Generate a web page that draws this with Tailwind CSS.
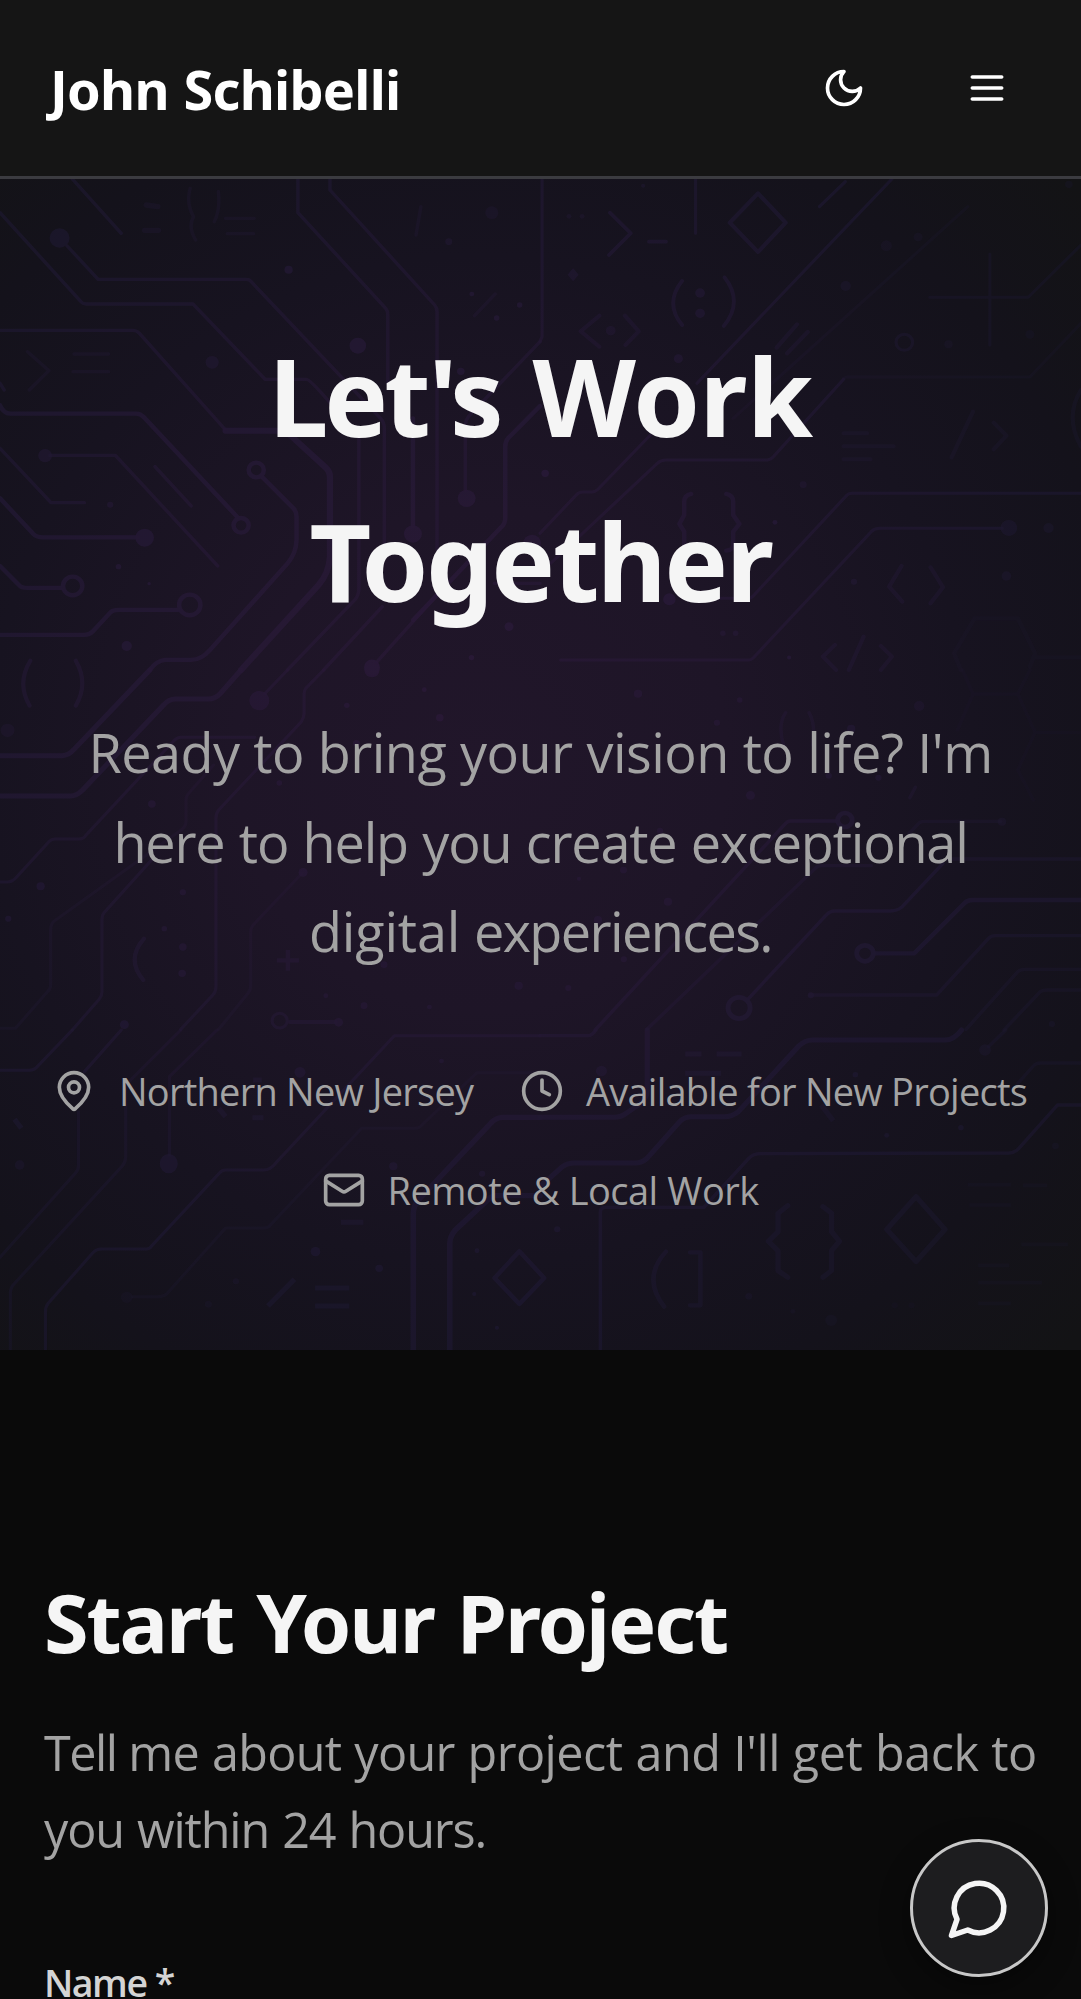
<!DOCTYPE html>
<html lang="en">
<head>
<meta charset="utf-8">
<title>John Schibelli</title>
<script src="https://cdn.jsdelivr.net/npm/@tailwindcss/browser@4"></script>
</head>
<body class="relative h-[1999px] w-[1081px] overflow-hidden bg-[#0a0a0a] font-['Open_Sans',sans-serif] text-[#a3a3a3]">

<header class="flex h-[179px] items-center justify-between border-b-[3px] border-[#3b3b40] bg-[#151515] pr-[72px] pl-[50px]">
  <div class="mt-[2px] font-['Noto_Sans',sans-serif] text-[54px] leading-[77px] font-bold tracking-[-0.75px] [word-spacing:1.5px] whitespace-nowrap text-white">John Schibelli</div>
  <div class="flex items-center gap-[99px] text-white">
    <button aria-label="Toggle theme">
      <svg class="size-[44px]" viewBox="0 0 24 24" fill="none" stroke="currentColor" stroke-width="2" stroke-linecap="round" stroke-linejoin="round"><path d="M12 3a6 6 0 0 0 9 9 9 9 0 1 1-9-9Z"/></svg>
    </button>
    <button aria-label="Menu">
      <svg class="size-[44px]" viewBox="0 0 24 24" fill="none" stroke="currentColor" stroke-width="2" stroke-linecap="round" stroke-linejoin="round"><path d="M4 6h16M4 12h16M4 18h16"/></svg>
    </button>
  </div>
</header>

<section class="relative h-[1171px] overflow-hidden bg-[#131316] pt-[134px]">
  <!-- Circuit board backdrop -->
  <svg class="absolute inset-0 h-full w-full" viewBox="0 179 1081 1171" preserveAspectRatio="none" aria-hidden="true">
    <defs>
      <radialGradient id="glow" gradientUnits="userSpaceOnUse" cx="0" cy="0" r="1" gradientTransform="translate(480 760) scale(820 840)">
        <stop offset="0" stop-color="#21162a"/>
        <stop offset=".3" stop-color="#1e1527"/>
        <stop offset=".6" stop-color="#171320"/>
        <stop offset=".8" stop-color="#14121b"/>
        <stop offset="1" stop-color="#131315"/>
      </radialGradient>
      <radialGradient id="ink" gradientUnits="userSpaceOnUse" cx="0" cy="0" r="1" gradientTransform="translate(450 700) scale(860 860)">
        <stop offset="0" stop-color="#2a1937"/>
        <stop offset=".35" stop-color="#251834"/>
        <stop offset=".7" stop-color="#1d182f"/>
        <stop offset="1" stop-color="#181629"/>
      </radialGradient>
      <mask id="traces" maskUnits="userSpaceOnUse" x="0" y="179" width="1081" height="1171">
        <!-- upper left -->
        <g transform="translate(0 170) scale(.3444 .3333)" fill="none" stroke="#fff" stroke-width="10" stroke-linecap="round" stroke-linejoin="round">
          <g opacity=".75">
            <path d="M210 27L352 190M0 128L235 395Q240 402 250 402H560L770 628H890Q900 628 960 700" />
            <path d="M195 228L285 328H715Q725 328 730 336L1105 745Q1116 757 1116 775V1130"/>
            <path d="M0 481H385Q397 481 405 490L655 780"/>
            <path d="M865 27V128L1120 415Q1126 422 1126 435V640M958 27V60L1262 405Q1269 413 1269 425V1140"/>
            <path d="M145 856H335L632 1188M450 890L555 1008M0 835L148 998H245M0 640L12 660"/>
            <path d="M1568 515L1360 740Q1351 752 1351 765V960M1042 805V1260Q1040 1280 1030 1290L835 1500M1110 1310L940 1500M1568 1240H1435M1290 1250L1095 1475"/>
          </g>
          <g stroke-width="13" opacity=".9">
            <path d="M0 706Q10 730 30 731H395Q408 731 418 742L688 1040"/>
            <path d="M0 985L95 1090Q105 1102 125 1102H400M0 1188L55 1245Q62 1254 80 1254H182M0 1395H245Q260 1395 270 1384L320 1328Q328 1320 345 1320H516"/>
            <path d="M762 922L852 1015Q861 1025 861 1040V1110Q860 1150 835 1180L610 1440Q585 1470 555 1470H480Q455 1472 435 1500"/>
            <path d="M1199 745V1070M1568 708L1475 805Q1467 815 1467 830V1045Q1467 1062 1455 1072L1200 1350" />
            <circle cx="700" cy="1066" r="22"/><circle cx="744" cy="900" r="22"/><circle cx="211" cy="1248" r="28"/><circle cx="551" cy="1305" r="31"/>
          </g>
          <path stroke-width="18" opacity=".9" d="M655 782H805Q835 782 860 812L948 895Q958 905 958 920V1160Q955 1210 925 1245L700 1500"/>
          <g fill="#fff" stroke="none" opacity=".9">
            <circle cx="173" cy="204" r="29" opacity=".8"/><circle cx="616" cy="577" r="19" opacity=".7"/><circle cx="1039" cy="527" r="24"/><circle cx="838" cy="299" r="12"/><circle cx="1303" cy="215" r="10" opacity=".7"/><circle cx="1428" cy="128" r="19" opacity=".5"/><circle cx="131" cy="857" r="20" opacity=".8"/><circle cx="420" cy="1103" r="27"/><circle cx="1355" cy="985" r="26"/><circle cx="1199" cy="1092" r="26"/><circle cx="1338" cy="604" r="11"/><circle cx="1545" cy="1120" r="26"/><circle cx="320" cy="1004" r="9" opacity=".8"/><circle cx="344" cy="1190" r="8"/><circle cx="368" cy="1428" r="15"/><circle cx="1080" cy="1492" r="23"/><circle cx="1478" cy="1370" r="13"/><circle cx="1369" cy="1463" r="8"/><circle cx="1370" cy="372" r="7"/><circle cx="1442" cy="444" r="8"/><circle cx="1509" cy="405" r="8"/><circle cx="433" cy="1241" r="5"/>
          </g>
          <g opacity=".45">
            <path d="M655 145H738M660 191H736M215 552H315M212 605H315M80 545L142 602L85 660M1378 437L1438 372M552 55Q540 100 562 140Q545 170 568 210M634 65Q640 120 622 155M1222 110L1208 195"/>
            <path stroke-width="16" d="M425 105L458 110M420 181H460"/>
          </g>
        </g>
        <!-- upper right -->
        <g transform="translate(540 170) scale(.345 .3333)" fill="none" stroke="#fff" stroke-width="9" stroke-linecap="round" stroke-linejoin="round">
          <g opacity=".8">
            <path d="M6 27V500L0 515M451 27V190M1020 27L455 640M885 35L810 110M0 1090L105 975Q112 966 125 966H150Q160 966 168 958L320 795M0 1210L340 880Q350 870 365 870H660Q670 868 675 862L880 628" />
            <path d="M560 745L1240 110M880 625L890 621H1420L1568 460" opacity=".4"/>
            <path d="M520 1285H600Q612 1285 618 1278L890 975Q895 970 905 970H1568M60 1470H605Q612 1470 618 1464L960 1085Q970 1075 985 1075H1340"/>
            <path d="M1130 382H1415L1568 225M1304 252V525" opacity=".6"/>
            <path stroke-width="12" d="M632 70L712 158L632 246L550 158Z"/>
            <path stroke-width="11" d="M203 128L263 190L200 255M316 215H365M412 333Q360 400 412 465M535 322Q590 395 533 468"/>
          </g>
          <path stroke-width="13" opacity=".8" d="M438 972Q418 976 418 995V1035L404 1062L418 1085V1125Q418 1140 438 1142M540 972Q560 976 560 995V1035L578 1062L560 1085V1125Q560 1140 540 1142"/>
          <g opacity=".6" stroke-width="12">
            <path d="M172 437L118 484L172 530M246 437L286 484L248 525M745 463L686 533M776 486L716 550"/>
            <path d="M880 790H948M880 829H1025M880 868H958M1255 725L1193 862M1315 758L1352 797L1315 838M1568 660Q1520 740 1568 830" opacity=".7"/>
            <path d="M1048 1188L1012 1250L1050 1295M1132 1192L1168 1252L1132 1300M855 1425L820 1460L858 1500M938 1400L895 1500M988 1428L1020 1460L988 1500"/>
            <circle cx="1056" cy="517" r="24" stroke-width="9"/>
            <path d="M1200 1450L1260 1345H1385L1435 1450L1420 1490M1200 1450L1220 1500M1435 1462H1568" opacity=".4"/>
          </g>
          <g fill="#fff" stroke="none">
            <circle cx="464" cy="369" r="14" opacity=".8"/><circle cx="464" cy="430" r="14" opacity=".8"/><circle cx="401" cy="566" r="13" opacity=".8"/><circle cx="886" cy="348" r="15" opacity=".5"/><circle cx="1004" cy="227" r="16" opacity=".4"/><circle cx="1096" cy="201" r="13" opacity=".4"/><circle cx="1184" cy="523" r="12" opacity=".4"/><circle cx="1420" cy="493" r="13" opacity=".3"/><circle cx="1359" cy="1074" r="24" opacity=".6"/><circle cx="1474" cy="1074" r="15" opacity=".5"/><circle cx="1352" cy="1218" r="14" opacity=".5"/><circle cx="910" cy="1235" r="9" opacity=".7"/><circle cx="763" cy="944" r="10" opacity=".6"/><circle cx="681" cy="1057" r="7"/><circle cx="15" cy="910" r="11"/><circle cx="530" cy="1390" r="8" opacity=".7"/><circle cx="567" cy="1390" r="8" opacity=".7"/><circle cx="375" cy="1288" r="18"/><circle cx="205" cy="482" r="14" opacity=".6"/><path d="M96 295L112 314L96 334L80 314Z" opacity=".7"/><circle cx="84" cy="139" r="7" opacity=".5"/><circle cx="122" cy="139" r="7" opacity=".5"/><circle cx="299" cy="47" r="6" opacity=".6"/><circle cx="1533" cy="43" r="11" opacity=".4"/><circle cx="722" cy="1463" r="6"/>
          </g>
        </g>
        <!-- middle left -->
        <g transform="translate(0 670) scale(.3444 .3333)" fill="none" stroke="#fff" stroke-width="9" stroke-linecap="round" stroke-linejoin="round">
          <path stroke-width="15" opacity=".9" d="M435 0L215 238Q200 257 180 257H0M700 0L640 70Q625 87 605 87H510Q490 87 475 105L240 360Q222 378 205 378H0"/>
          <g opacity=".75">
            <path d="M835 0L770 70M940 0L888 55Q883 62 883 70V130Q882 145 875 155L635 420Q627 430 627 445V950Q627 965 618 975L525 1078M740 202H525Q515 202 505 212L250 495Q243 507 230 507H160Q150 507 142 515L45 625Q35 636 20 636H0"/>
            <path d="M620 285L548 370Q540 378 540 390V455Q540 467 530 477L155 755Q147 765 147 780V945Q147 957 138 965L45 1075H0" opacity=".6"/>
            <path d="M440 570L302 728Q296 735 296 748V965Q296 978 288 988L210 1080"/>
            <path d="M875 612L735 765Q728 775 728 785V945Q728 960 720 970L635 1078" opacity=".6"/>
            <path d="M88 -28Q48 40 86 107M220 -28Q258 40 220 107M418 806Q365 868 416 930M842 1056H975" stroke-width="12"/>
            <path stroke-width="13" stroke-linecap="butt" d="M804 871H868M836 840V902"/>
            <circle cx="812" cy="1052" r="22"/>
          </g>
          <g fill="#fff" stroke="none" opacity=".85">
            <circle cx="753" cy="92" r="29"/><circle cx="1080" cy="0" r="22"/><circle cx="22" cy="181" r="20" opacity=".6"/><circle cx="441" cy="402" r="11"/><circle cx="118" cy="649" r="12"/><circle cx="24" cy="746" r="9"/><circle cx="531" cy="667" r="9"/><circle cx="477" cy="776" r="8"/><circle cx="531" cy="831" r="11"/><circle cx="529" cy="910" r="11"/><circle cx="880" cy="607" r="13"/><circle cx="1277" cy="143" r="11"/><circle cx="1232" cy="59" r="7"/><circle cx="1007" cy="106" r="8"/><circle cx="983" cy="1057" r="13"/><circle cx="1057" cy="1007" r="10"/><circle cx="1506" cy="947" r="12"/><circle cx="946" cy="977" r="7"/><circle cx="361" cy="1064" r="13"/><circle cx="1115" cy="884" r="10"/><circle cx="1035" cy="220" r="10"/><circle cx="811" cy="339" r="8"/><circle cx="1247" cy="1011" r="7"/>
          </g>
        </g>
        <!-- middle right -->
        <g transform="translate(540 670) scale(.345 .3333)" fill="none" stroke="#fff" stroke-width="10" stroke-linecap="round" stroke-linejoin="round">
          <g opacity=".85">
            <path d="M858 453H725Q718 453 712 460L160 1080M605 985L830 735Q840 723 855 723H1015Q1035 723 1048 712L1168 580"/>
            <path stroke-width="13" d="M970 850H1085L1230 700Q1238 690 1255 690H1568"/>
            <path d="M785 975H1150L1300 805Q1308 797 1320 797H1568M1180 567H1568M960 587H815Q805 587 798 595L310 1078" opacity=".75"/>
            <path d="M1235 1078L1385 905Q1392 898 1405 898H1568M1345 1080L1450 965Q1458 960 1470 960H1568M1070 490L1100 458Q1105 454 1115 454H1335" opacity=".6"/>
            <path d="M712 128Q688 165 706 225M780 128Q800 165 790 225M1088 352L1072 383" opacity=".7"/>
            <path d="M1225 0L1255 72H1385L1420 0M1255 72L1210 180M1385 72L1435 187H1568M1435 187L1385 300L1430 390" opacity=".22"/>
          </g>
          <g stroke-width="14" opacity=".9"><circle cx="884" cy="450" r="21"/><circle cx="942" cy="850" r="24"/><circle cx="577" cy="1014" r="32"/></g>
          <g fill="#fff" stroke="none" opacity=".8">
            <circle cx="284" cy="71" r="12"/><circle cx="513" cy="158" r="9"/><circle cx="579" cy="90" r="8"/><circle cx="610" cy="376" r="13"/><circle cx="902" cy="176" r="12"/><circle cx="1099" cy="108" r="15" opacity=".7"/><circle cx="981" cy="323" r="9"/><circle cx="837" cy="317" r="9"/><circle cx="1339" cy="455" r="12" opacity=".7"/><circle cx="242" cy="600" r="10"/><circle cx="371" cy="695" r="12"/><circle cx="243" cy="868" r="9"/><circle cx="82" cy="954" r="9"/><circle cx="168" cy="750" r="12"/><circle cx="348" cy="482" r="9"/><circle cx="785" cy="976" r="9"/><circle cx="1484" cy="1062" r="9" opacity=".6"/><circle cx="113" cy="626" r="6"/>
          </g>
        </g>
        <!-- lower left -->
        <g transform="translate(0 1030) scale(.3444 .3333)" fill="none" stroke="#fff" stroke-width="9" stroke-linecap="round" stroke-linejoin="round">
          <g opacity=".8">
            <path d="M210 0L110 108Q100 121 85 121H0M352 0L245 125M1568 17H1145L800 400Q785 420 765 420H655Q645 420 638 428L440 648Q435 657 425 657H295Q280 657 270 668L140 820Q132 830 132 845V960"/>
            <path d="M525 0L365 165V380Q365 395 355 408L38 765Q30 775 30 790V960M228 245V405Q228 420 220 428L0 682M630 0L492 140V375" opacity=".7"/>
            <path d="M1568 128H1385L1225 285Q1218 295 1205 295H1050L785 585Q780 594 765 594H655L490 785Q480 800 460 800H385" opacity=".5"/>
          </g>
          <path stroke-width="16" d="M1568 262H1460Q1440 262 1425 280L1215 510Q1200 528 1200 550V960M1568 497H1440Q1428 497 1418 508L1322 600Q1306 620 1306 640V960" opacity=".85"/>
          <path stroke-width="13" d="M1508 664L1580 744L1508 822L1436 744Z" opacity=".8"/>
          <g opacity=".65" stroke-width="15" stroke-linecap="butt"><path d="M915 774H1014M915 828H1014M990 577H1055M778 828L855 748M735 150H760M733 263H765M42 268L62 295M635 235L655 260"/></g>
          <g fill="#fff" stroke="none" opacity=".8">
            <ellipse cx="490" cy="401" rx="26" ry="29"/><circle cx="871" cy="127" r="16"/><circle cx="57" cy="405" r="14" opacity=".7"/><circle cx="916" cy="665" r="14"/><circle cx="1101" cy="715" r="11"/><circle cx="1142" cy="409" r="12"/><circle cx="1400" cy="431" r="9"/><circle cx="685" cy="754" r="9" opacity=".6"/><circle cx="368" cy="802" r="17" opacity=".4"/><circle cx="605" cy="823" r="10" opacity=".5"/><circle cx="1282" cy="93" r="7"/><circle cx="1377" cy="792" r="6"/><circle cx="1443" cy="893" r="6"/><circle cx="1385" cy="662" r="7"/>
          </g>
        </g>
        <!-- lower right -->
        <g transform="translate(540 1030) scale(.345 .3333)" fill="none" stroke="#fff" stroke-width="10" stroke-linecap="round" stroke-linejoin="round">
          <path stroke-width="15" opacity=".85" d="M0 262H215Q235 262 250 250L285 225Q311 205 311 180V0M0 470L65 410Q80 399 100 399H275Q295 399 310 385L405 275Q418 260 440 260H535Q555 260 575 245L750 48Q768 30 790 30H1175Q1200 30 1222 0"/>
          <g opacity=".8">
            <path d="M0 17H140Q150 17 162 0M175 960V545Q176 532 190 532H475L605 385Q618 371 640 371L1360 369Q1378 368 1388 355L1500 225H1568"/>
            <path d="M1350 0L1300 50M1385 160L1430 108Q1438 99 1450 99H1568" opacity=".6"/>
            <path stroke-width="13" d="M365 665Q295 745 360 830M435 667H465V826H435" opacity=".8"/>
            <path stroke-width="15" d="M718 527L690 550V605L662 634L690 662V722L718 742M820 530L845 550V605L868 634L845 662V722L820 742M1090 500L1174 598L1090 695L1005 598Z" opacity=".75"/>
          </g>
          <g stroke-width="15" stroke-linecap="butt">
            <path d="M421 72H468M512 72H584M421 130H525" opacity=".7"/>
            <path d="M1240 464H1365M1245 525H1365M1395 643H1530M1270 706H1360M1270 758H1455M1270 820H1365M1400 466H1470" opacity=".3" stroke-width="11"/>
            <path d="M815 225L850 272" opacity=".5"/>
          </g>
          <g fill="#fff" stroke="none" opacity=".75">
            <circle cx="178" cy="123" r="16"/><circle cx="1290" cy="60" r="17" opacity=".7"/><circle cx="50" cy="598" r="9"/><circle cx="605" cy="799" r="10" opacity=".6"/><circle cx="844" cy="871" r="17" opacity=".5"/><circle cx="1220" cy="293" r="8"/><circle cx="1005" cy="316" r="7"/><circle cx="1494" cy="348" r="10" opacity=".5"/><circle cx="914" cy="134" r="8"/><circle cx="1028" cy="826" r="9" opacity=".3"/><circle cx="1077" cy="826" r="9" opacity=".3"/><circle cx="733" cy="844" r="7" opacity=".5"/>
          </g>
        </g>
      </mask>
    </defs>
    <rect x="0" y="179" width="1081" height="1171" fill="url(#glow)"/>
    <rect x="0" y="179" width="1081" height="1171" fill="url(#ink)" mask="url(#traces)"/>
  </svg>

  <div class="relative flex flex-col items-center text-center whitespace-nowrap">
    <h1 class="flex flex-col items-center font-['Noto_Sans',sans-serif] text-[107px] leading-[165px] font-bold text-[#f5f5f5]">
      <span class="[word-spacing:9px]"><span class="tracking-[-4px]">Let's </span><span class="tracking-[-0.6px]">Work</span></span>
      <span class="tracking-[-2.3px]">Together</span>
    </h1>
    <p class="mt-[65px] flex flex-col items-center text-[54px] leading-[89.5px]">
      <span class="tracking-[-0.55px] [word-spacing:0.4px]">Ready to bring your vision to life? I'm</span>
      <span class="tracking-[-1.2px] [word-spacing:1.6px]">here to help you create exceptional</span>
      <span><span class="tracking-[-0.2px]">digital </span><span class="tracking-[-1.6px]">experiences.</span></span>
    </p>
    <div class="mt-[87px] flex flex-wrap justify-center gap-[44px] text-[38px] leading-[55px]">
      <div class="flex w-[424px] items-center gap-[22px]">
        <svg class="size-[44px] shrink-0" viewBox="0 0 24 24" fill="none" stroke="currentColor" stroke-width="2" stroke-linecap="round" stroke-linejoin="round"><path d="M20 10c0 4.993-5.539 10.193-7.399 11.799a1 1 0 0 1-1.202 0C9.539 20.193 4 14.993 4 10a8 8 0 0 1 16 0"/><circle cx="12" cy="10" r="3"/></svg>
        <span class="ml-[1px] tracking-[-0.76px]">Northern New Jersey</span>
      </div>
      <div class="flex w-[509px] items-center gap-[22px]">
        <svg class="size-[44px] shrink-0" viewBox="0 0 24 24" fill="none" stroke="currentColor" stroke-width="2" stroke-linecap="round" stroke-linejoin="round"><circle cx="12" cy="12" r="10"/><path d="M12 6v6l4 2"/></svg>
        <span class="tracking-[-0.76px]">Available for New Projects</span>
      </div>
      <div class="flex w-[438px] items-center gap-[22px]">
        <svg class="size-[44px] shrink-0" viewBox="0 0 24 24" fill="none" stroke="currentColor" stroke-width="2" stroke-linecap="round" stroke-linejoin="round"><rect x="2" y="4" width="20" height="16" rx="2"/><path d="m22 7-8.97 5.7a1.94 1.94 0 0 1-2.06 0L2 7"/></svg>
        <span class="tracking-[-0.55px] [word-spacing:0.5px]">Remote &amp; Local Work</span>
      </div>
    </div>
  </div>
</section>

<section class="px-[44px] pt-[222px] whitespace-nowrap">
  <h2 class="font-['Noto_Sans',sans-serif] text-[81px] leading-[99px] font-bold tracking-[-2.1px] [word-spacing:4px] text-[#f5f5f5]">Start Your Project</h2>
  <p class="mt-[43px] flex flex-col text-[48.5px] leading-[77px]">
    <span class="[word-spacing:0.8px]"><span class="tracking-[-1.5px]">Tell </span><span class="tracking-[-0.65px]">me about your </span><span class="tracking-[-0.5px]">project and I'll get back to</span></span>
    <span class="tracking-[-1.1px] [word-spacing:1.5px]">you within 24 hours.</span>
  </p>
  <label class="mt-[96px] block text-[37.5px] leading-[38.5px] font-semibold tracking-[-1.5px] text-[#d4d4d4]">Name *</label>
</section>

<button aria-label="Open chat" class="absolute top-[1839px] left-[910px] flex size-[138px] items-center justify-center rounded-full border-[3px] border-[#c8c8c8] bg-[#1d1d1f] text-[#f5f5f5] shadow-[0_10px_30px_rgba(0,0,0,0.4)]">
  <svg class="size-[66px] shrink-0" viewBox="0 0 24 24" fill="none" stroke="currentColor" stroke-width="2" stroke-linecap="round" stroke-linejoin="round"><path d="M7.9 20A9 9 0 1 0 4 16.1L2 22Z"/></svg>
</button>
</body>
</html>
